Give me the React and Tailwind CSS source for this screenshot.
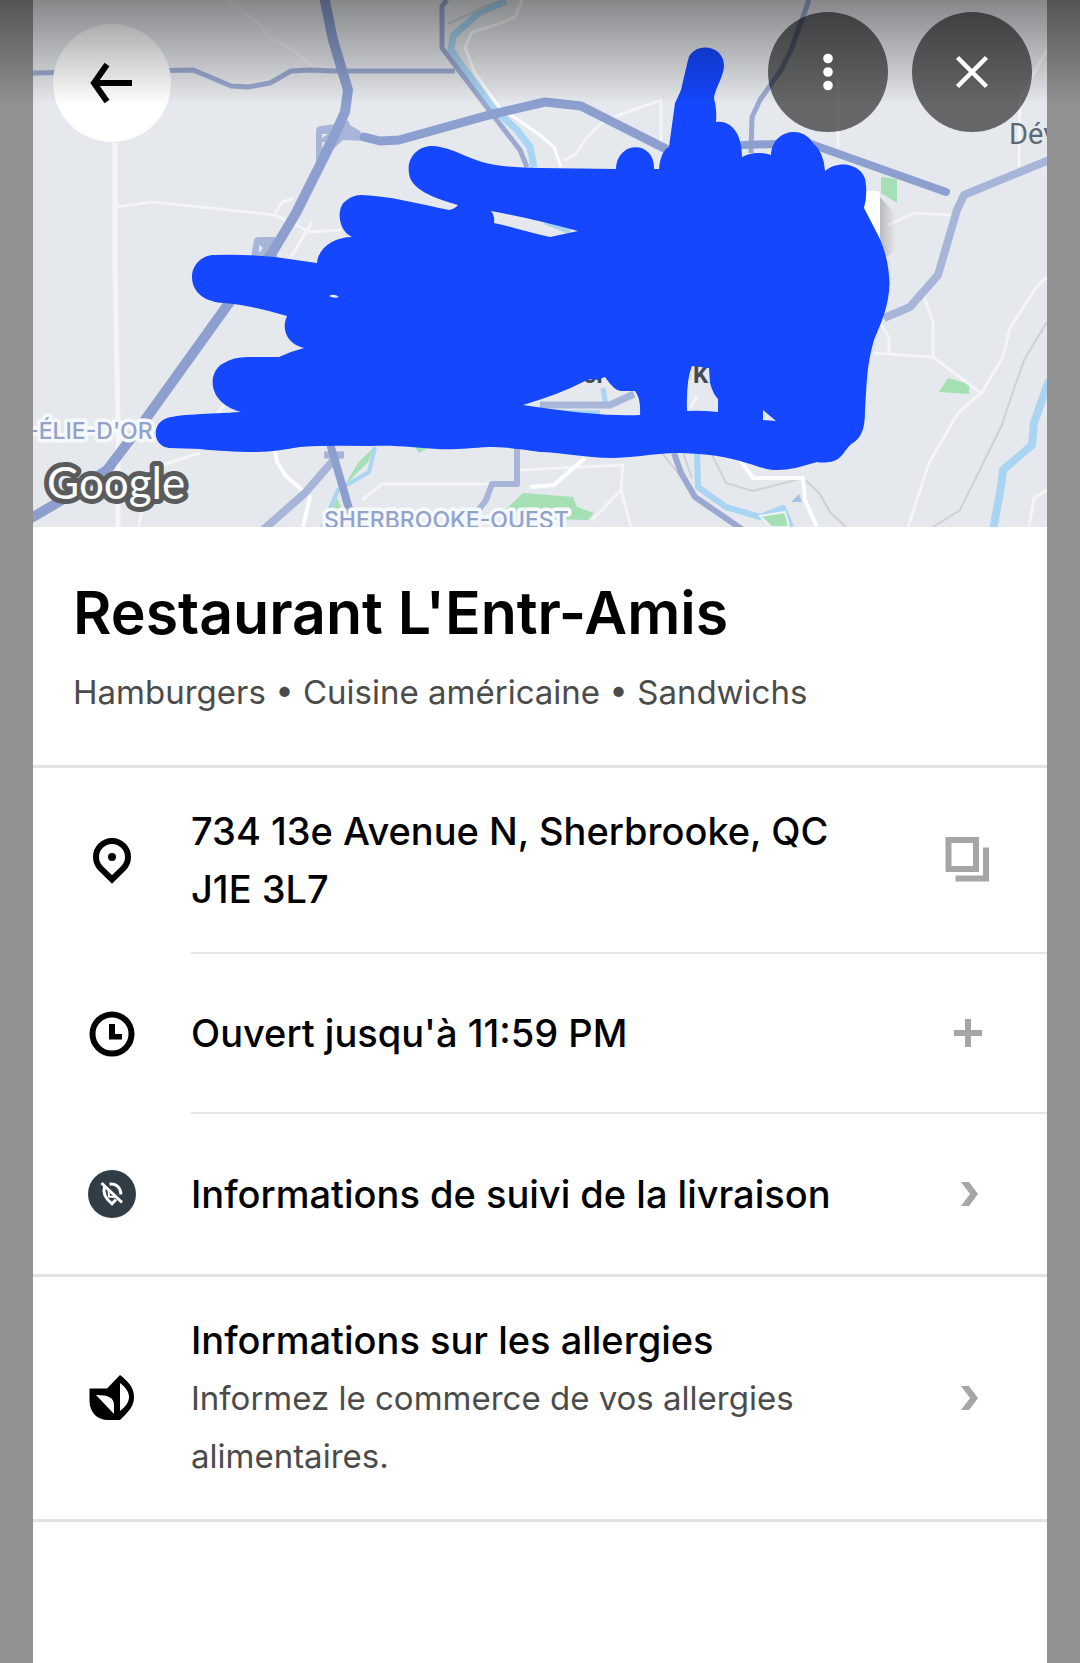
import React from "react";

function MapView() {
  return (
    <svg viewBox="33 0 1014 527" className="block w-full h-auto" role="img" aria-label="Carte">
      <rect x="33" y="0" width="1014" height="527" fill="#e5e8ec" />

      {/* Parks */}
      <g fill="#a5e0b4">
        <path d="M881 177 897 179V203L881 193z" />
        <path d="M939 392 948 378 969 384V394z" />
        <path d="M374 447 368 462 345 485 358 463z" />
        <path d="M337 498 343 512 331 512z" />
        <path d="M505 510 523 493 573 497 577 507 594 513 588 520 540 519z" />
        <path d="M415 447h14l-10 6z" />
      </g>

      {/* Water */}
      <g fill="none" stroke="#a9d5f3" strokeWidth="7" strokeLinejoin="round">
        <path d="M506 1 480 12 453 36 451 50 465 70 492 107 517 130 530 147 534 167" />
        <path d="M697 450 698 487 726 507 760 517 783 508 791 527" strokeWidth="6" />
        <path d="M375 447 369 472 338 490 322 527" strokeWidth="4" />
        <path d="M1049 380 1034 423 1032 445 1003 470 1001 487 993 530" strokeWidth="8" />
        <path d="M540 412 600 413 M603 388 606 406M545 222 570 232" strokeWidth="5" />
      </g>
      <path d="M791 502 799 494 802 502z" fill="#a7c4e3" />
      <path d="M760 516 785 512 789 527H771z" fill="#a5e0b4" stroke="#eef2f5" strokeWidth="2" />

      {/* Railways and trails */}
      <g fill="none" stroke="#cdd1d5" strokeWidth="2">
        <path d="M712 455 726 483 753 491 803 478 819 493 830 512 846 527" />
        <path d="M1047 322 1024 360 1001 427 960 510 933 527" />
        <path d="M662 453 682 478M683 453 692 478M448 24 490 4" />
      </g>

      {/* Local roads */}
      <g fill="none" stroke="#f3f5f7" strokeWidth="3" strokeLinejoin="round">
        <path d="M227 0 258 23 269 37 293 50 313 67" strokeOpacity=".5" />
        <path d="M115 143V270L118 417V527" strokeWidth="5" />
        <path d="M115 207 152 202 220 209 275 215 310 232 341 230" />
        <path d="M275 213 282 202 293 199M312 222 291 257M224 405 210 425" />
        <path d="M200 453 165 464 146 485 139 527" />
        <path d="M362 500 382 484H489M520 470 623 465 621 490 592 520M621 490 631 527" />
        <path d="M661 143V100L619 115 600 124 585 140 575 155 564 160" />
        <path d="M838 80V147M1019 167 1020 100 1032 77 1047 50M888 225 914 213 951 215" />
        <path d="M879 320 889 338V353M874 353 933 357 981 393M924 297 933 322V357" />
        <path d="M1047 277 1038 285 1010 328 1003 357 982 392 958 413 929 463 908 527" />
        <path d="M1047 490 1034 498 1029 527M690 408 697 396" />
      </g>
      <g fill="none" stroke="#fdfdfe" strokeWidth="4" strokeLinejoin="round">
        <path d="M522 0 515 17 496 25 472 32 465 47 475 73 499 107 540 135 554 147 561 167" strokeWidth="3" />
        <path d="M275 450 277 462 286 476 310 497 303 527" />
        <path d="M585 458 554 485 530 487M740 460 753 478H803L805 500 817 527" />
      </g>

      {/* Highways */}
      <g fill="none" stroke="#a7b5d9" strokeLinejoin="round">
        <path d="M1049 160 964 195 957 210 938 275 910 307 884 318" strokeWidth="8" />
        <path d="M338 455 305 493 263 530" strokeWidth="8" />
        <path d="M324 455 344 455" strokeWidth="7" />
        <path d="M517 445V484H492L486 500 477 512" strokeWidth="6" />
        <path d="M540 405H610L634 394" strokeWidth="7" />
      </g>
      <g fill="#a7b5d9" fillRule="evenodd">
        <path d="M316 130Q317 126 321 126L344 123 348 120 350 125 360 131 366 141 343 140 331 151 316 165zM322 134V138L328 134zM322 142V148L325 142z" />
        <path d="M254 240Q255 237 259 237H275L277 258H251zM259 245V253L263 248z" />
      </g>
      <g fill="none" stroke="#9ba9d0" strokeWidth="5" strokeLinejoin="round">
        <path d="M33 73 193 70 210 77 231 86 248 87 270 83 291 71 310 70 331 71H455" />
        <path d="M447 0 442 6V48L489 110 520 150 527 167" />
        <path d="M809 0 791 50 781 70 760 100 752 117 751 153" />
        <path d="M674 453 681 473 695 497 743 530" strokeWidth="6" />
      </g>
      <g fill="none" stroke="#8c9fcf" strokeLinejoin="round" strokeLinecap="round">
        <path d="M324 -4 333 40 348 90 345 112 331 143 296 213 272 253 229 303 145 420 107 470 62 500 28 520" strokeWidth="10" />
        <path d="M364 137 380 141 399 140 489 115 545 102 581 106 666 149" strokeWidth="9" />
        <path d="M743 145 808 143 946 192" strokeWidth="8" />
        <path d="M331 447 350 512" strokeWidth="8" />
      </g>

      {/* Labels */}
      <g className="font-[Inter]" fontSize="23" fontWeight="500" fill="#92a3cb" stroke="#f5f8fd" strokeWidth="7" strokeLinejoin="round" paintOrder="stroke">
        <text x="28" y="439">-ÉLIE-D'OR</text>
        <text x="324" y="528">SHERBROOKE-OUEST</text>
      </g>
      <text x="1009" y="144" className="font-[Roboto]" fontSize="29" fill="#5f6975">Dév</text>
      <g className="font-[Roboto]" fontSize="24" fontWeight="700" fill="#414a55">
        <text x="583" y="383">or</text>
        <text x="693" y="383">K</text>
      </g>

      {/* Info bubble edge */}
      <defs>
        <linearGradient id="bubbleShadow" x1="0" x2="1" y1="0" y2="0">
          <stop offset="0" stopColor="#000" stopOpacity=".2" />
          <stop offset="1" stopColor="#000" stopOpacity="0" />
        </linearGradient>
      </defs>
      <path d="M880 197 896 215V250L880 262z" fill="url(#bubbleShadow)" />
      <rect x="840" y="191" width="40" height="60" rx="4" fill="#fff" />

      {/* Marker strokes */}
      <path
        fill="#1447ff"
        fillRule="evenodd"
        d="M688 60C692 42 724 43 724 66C724 76 714 90 714 99Q717 108 716 122C730 120 742 132 742 157Q755 150 771 155C772 130 802 125 812 142Q824 152 825 171C840 158 866 165 866 185Q867 198 864 208L879 237C886 252 889 268 889.500 283C889 308 880 325 874 340C866 368 867 385 865 410C865 430 861 437 853 443C845 447 843 461 829 462Q822 463 817 462C800 467 790 470 777 470C765 470 755 465 740 461C720 455 695 453 674 453C650 454 630 458 612 458C585 458 560 452 540 452C515 448 500 447 489 447C470 448 455 450 437 449C415 448 400 445 372 446Q320 445 300 447C280 450 275 452 248 452Q215 451 200 449L169 448C152 446 152 424 165 419C175 414 210 414 241 412C205 402 208 370 224 363Q233 357 248 357L279 357Q292 351 304 348C290 345 280 332 287 316Q250 305 224 303C202 302 192 290 192 277C192 265 202 255 214 255Q245 254 275 257L317 263C318 248 334 237 352 237C337 230 336 206 347 200Q353 195 362 195C390 196 420 204 449 210Q455 209 458 205C425 196 410 186 409 173C406 155 422 142 440 147C460 151 473 162 496 165Q515 168 540 168L616 169C617 140 655 140 654 169L659 169C660 158 663 150 669 147L675 103Q678 97 681 90z
        M491 211Q495 216 494 223C510 226 530 233 550 237L578 231Q530 218 491 211z
        M523 405Q560 394 583 382Q592 377 597 380L605 377Q615 392 622 391L635 391Q641 398 640 415Q600 417 523 405z
        M687 411Q686 380 692 366L709 368 710 383Q713 394 718 399V412Q700 410 687 411z
        M763 410 776 421 763 420z
        M329 296Q334 293 339 297 334 299 329 296z"
      />

      <text x="47" y="499" className="font-[Lato]" fontSize="44" fontWeight="400" fill="#fff" stroke="#5a5b5d" strokeWidth="10" strokeLinejoin="round" paintOrder="stroke">
        Google
      </text>
    </svg>
  );
}

function PinIcon() {
  return (
    <svg viewBox="0 0 48 48" className="size-12" fill="none" stroke="#000" strokeWidth="6">
      <path d="M12.700 31.300A16 16 0 1 1 35.300 31.300L24 42.500z" />
      <circle cx="24" cy="20" r="4" fill="#000" stroke="none" />
    </svg>
  );
}

function ClockIcon() {
  return (
    <svg viewBox="0 0 48 48" className="size-12">
      <circle cx="24" cy="24" r="19.500" fill="none" stroke="#000" strokeWidth="6" />
      <path d="M21 14h6v10h7v5.500H21z" />
    </svg>
  );
}

function TrackingOffIcon() {
  return (
    <svg viewBox="0 0 48 48" className="size-12" fill="none" stroke="#fff" strokeWidth="3">
      <circle cx="24" cy="24" r="24" fill="#313d46" stroke="none" />
      <path d="M13.500 13 34 32.500M21.500 14.200C28 13 33 17.500 32.800 24.500M16.500 17C14.500 23 17 28 24 33.800L28 29.500" />
      <path d="M20.500 20 21 26.500 27 27" strokeWidth="2" />
    </svg>
  );
}

function LeafIcon() {
  return (
    <svg viewBox="0 0 48 48" className="size-12">
      <path
        fillRule="evenodd"
        d="M1.500 14.500H19L32 1C41 8 46 14 46 23C46 33 40 38 32 46H20C9 46 1.500 38 1.500 27zM32 9V37C44 28 44 18 32 9zM8 21 26 40V31C26 24 21 21 8 21z"
      />
    </svg>
  );
}

function CopyIcon() {
  return (
    <svg viewBox="0 0 48 48" className="size-12" fill="none" stroke="#a6a6a6" strokeWidth="6">
      <path d="M4.500 4H32V33H4.500zM42 11.500V42.500H11.500" />
    </svg>
  );
}

function PlusIcon() {
  return (
    <svg viewBox="0 0 48 48" className="size-12">
      <path d="M24 10V38M10 24H38" stroke="#a6a6a6" strokeWidth="6" />
    </svg>
  );
}

function ChevronIcon() {
  return (
    <svg viewBox="0 0 48 48" className="size-12">
      <path d="M17 12h8l9 12-9 12h-8l9-12z" fill="#a6a6a6" />
    </svg>
  );
}

const groups = [
  [
    { title: "734 13e Avenue N, Sherbrooke, QC J1E 3L7", icon: PinIcon, action: CopyIcon },
    { title: "Ouvert jusqu'à 11:59 PM", icon: ClockIcon, action: PlusIcon },
    { title: "Informations de suivi de la livraison", icon: TrackingOffIcon, action: ChevronIcon },
  ],
  [
    {
      title: "Informations sur les allergies",
      text: "Informez le commerce de vos allergies alimentaires.",
      icon: LeafIcon,
      action: ChevronIcon,
    },
  ],
];

function InfoRow({ title, text, icon: Icon, action: Action, divided }) {
  return (
    <li>
      <button type="button" className="flex w-full items-stretch text-left pl-[55px]">
        <span className="flex items-center shrink-0">
          <Icon />
        </span>
        <span
          className={`ml-[55px] flex flex-1 items-center justify-between py-[34px] min-h-40 pr-[55px] ${
            divided ? "border-b-2 border-[#e6e6e6]" : ""
          }`}
        >
          <span className="block max-w-[660px]">
            <span className="block text-[38px] leading-[58px] font-medium text-black">{title}</span>
            {text && <span className="block text-[33px] leading-[58px] text-[#4b4b4b]">{text}</span>}
          </span>
          <Action />
        </span>
      </button>
    </li>
  );
}

export default function App() {
  return (
    <div className="relative min-h-screen bg-[#919191] px-[33px] font-[Inter,sans-serif]">
      <main className="min-h-screen bg-white">
        <header className="relative">
          <MapView />
          <button
            type="button"
            aria-label="Retour"
            className="absolute left-5 top-6 flex size-[118px] items-center justify-center rounded-full bg-white"
          >
            <svg viewBox="0 0 48 48" className="size-12" fill="none" stroke="#000" strokeWidth="6">
              <path d="M44 24H7M19 5.500 6 24 19 42.500" />
            </svg>
          </button>
        </header>

        <section className="px-10 pt-[52px] pb-[43px] border-b-3 border-[#e2e2e2]">
          <h1 className="text-[59px] leading-[68px] font-semibold text-black">Restaurant L'Entr-Amis</h1>
          <p className="mt-4 text-[33px] leading-[59px] text-[#4b4b4b]">
            Hamburgers • Cuisine américaine • Sandwichs
          </p>
        </section>

        {groups.map((rows, i) => (
          <ul key={i} className="border-b-3 border-[#e2e2e2]">
            {rows.map((row, j) => (
              <InfoRow key={row.title} {...row} divided={j < rows.length - 1} />
            ))}
          </ul>
        ))}
      </main>

      {/* Status bar shade */}
      <div className="pointer-events-none absolute inset-x-0 top-0 h-[105px] bg-linear-to-b from-black/42 to-transparent" />

      <div className="absolute right-12 top-3 flex gap-6">
        <button type="button" aria-label="Plus d'options" className="flex size-[120px] items-center justify-center rounded-full bg-black/56">
          <svg viewBox="0 0 48 48" className="size-12" fill="#fff">
            <circle cx="24" cy="10.500" r="4.800" />
            <circle cx="24" cy="24" r="4.800" />
            <circle cx="24" cy="37.500" r="4.800" />
          </svg>
        </button>
        <button type="button" aria-label="Fermer" className="flex size-[120px] items-center justify-center rounded-full bg-black/56">
          <svg viewBox="0 0 48 48" className="size-12">
            <path d="M9.500 9.500 38.500 38.500M38.500 9.500 9.500 38.500" stroke="#fff" strokeWidth="4.500" />
          </svg>
        </button>
      </div>
    </div>
  );
}
